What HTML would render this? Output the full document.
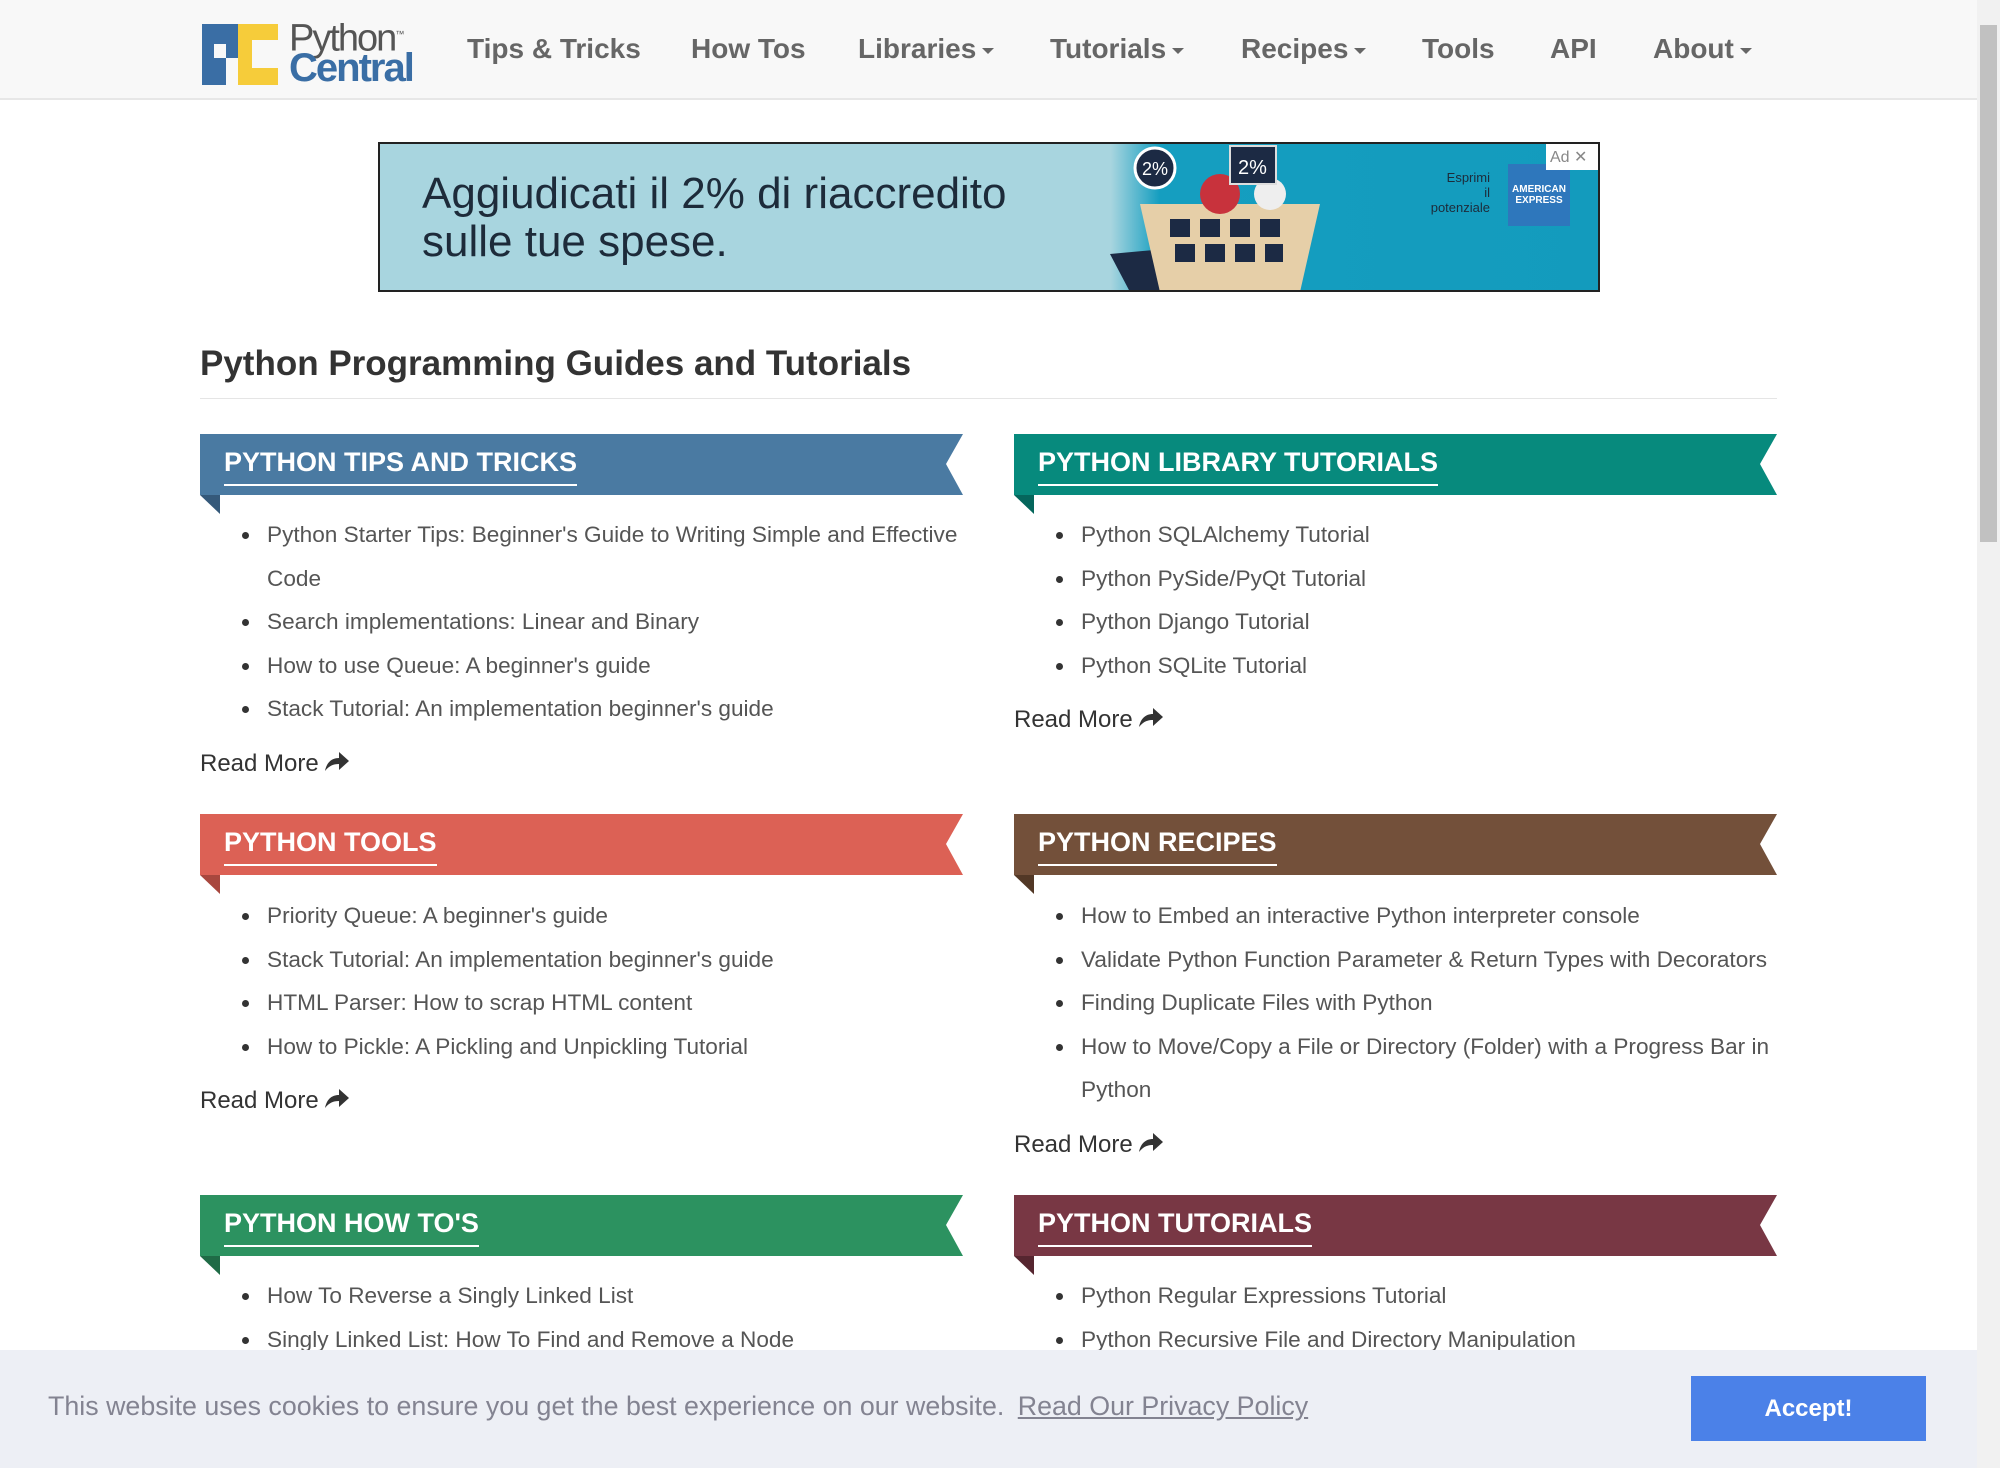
<!DOCTYPE html>
<html><head><meta charset="utf-8"><style>
*{margin:0;padding:0;box-sizing:border-box}
body{width:2000px;height:1468px;overflow:hidden;background:#fff;font-family:"Liberation Sans",Arial,sans-serif;position:relative}
.nav{position:absolute;left:0;top:0;width:1977px;height:100px;background:#f8f8f8;border-bottom:2px solid #e7e7e7}
.nav a{position:absolute;top:33px;font-size:28px;font-weight:bold;color:#666;text-decoration:none;white-space:nowrap}
.caret{display:inline-block;width:0;height:0;border-left:6px solid transparent;border-right:6px solid transparent;border-top:6px solid #666;vertical-align:middle;margin-left:6px}
.abs{position:absolute}
h1{position:absolute;left:200px;top:344px;font-size:35px;color:#333;font-weight:bold}
.rule{position:absolute;left:200px;top:398px;width:1577px;height:1px;background:#e5e5e5}
.ban{position:absolute;width:763px;height:80px}
.ban span{position:absolute;left:24px;top:13px;font-size:27px;font-weight:bold;color:#fff;border-bottom:2px solid #fff;padding-bottom:6px;white-space:nowrap}
ul{position:absolute;list-style:none}
li{position:relative;padding-left:67px;font-size:22.6px;color:#555;line-height:43.5px;width:770px}
li:before{content:"";position:absolute;left:42px;top:19px;width:7px;height:7px;border-radius:50%;background:#333}
.rm{position:absolute;font-size:24px;color:#333}
.rm svg{vertical-align:-1px;margin-left:6px}
</style></head><body>
<div class="nav">
 <svg class="abs" style="left:200px;top:22px" width="80" height="65" viewBox="0 0 80 65">
  <rect x="2" y="2" width="36" height="61" fill="#3a6ea5"/><rect x="14" y="22" width="12" height="14" fill="#f8f8f8"/>
  <rect x="38" y="2" width="40" height="61" fill="#f6cc3a"/><rect x="52" y="18" width="26" height="28" fill="#f8f8f8"/>
  <rect x="38" y="36" width="14" height="27" fill="#f6cc3a"/><rect x="26" y="36" width="12" height="27" fill="#f8f8f8"/>
 </svg>
 <div class="abs" style="left:289px;top:16px;font-size:38px;color:#555;letter-spacing:-2px;line-height:36px">Python<sup style="font-size:9px">™</sup></div>
 <div class="abs" style="left:289px;top:48px;font-size:40px;color:#3a6ea5;font-weight:bold;letter-spacing:-2px;line-height:40px">Central</div>
 <a style="left:467px">Tips &amp; Tricks</a>
 <a style="left:691px">How Tos</a>
 <a style="left:858px">Libraries<span class="caret"></span></a>
 <a style="left:1050px">Tutorials<span class="caret"></span></a>
 <a style="left:1241px">Recipes<span class="caret"></span></a>
 <a style="left:1422px">Tools</a>
 <a style="left:1550px">API</a>
 <a style="left:1653px">About<span class="caret"></span></a>
</div>
<div class="abs" style="left:1977px;top:0;width:23px;height:1468px;background:#f1f1f1"></div>
<div class="abs" style="left:1980px;top:25px;width:17px;height:517px;background:#c1c1c1"></div>

<div class="abs" style="left:378px;top:142px;width:1222px;height:150px;border:2px solid #222;background:linear-gradient(90deg,#a8d5df 0,#a8d5df 60%,#159ec0 64%,#139bbd 100%);overflow:hidden">
 <div class="abs" style="left:42px;top:26px;font-size:44px;color:#1d2b3a;line-height:48px">Aggiudicati il 2% di riaccredito<br>sulle tue spese.</div>
 <svg class="abs" style="left:690px;top:0" width="300" height="150" viewBox="0 0 300 150">
  <polygon points="40,110 150,100 220,110 210,148 60,148" fill="#1c2a44"/>
  <polygon points="70,60 250,60 230,148 90,148" fill="#e6cfa8"/>
  <g fill="#1c2a44"><rect x="100" y="75" width="20" height="18"/><rect x="130" y="75" width="20" height="18"/><rect x="160" y="75" width="20" height="18"/><rect x="190" y="75" width="20" height="18"/><rect x="105" y="100" width="20" height="18"/><rect x="135" y="100" width="20" height="18"/><rect x="165" y="100" width="20" height="18"/><rect x="195" y="100" width="18" height="18"/></g>
  <circle cx="150" cy="50" r="20" fill="#c8323c"/><circle cx="200" cy="50" r="16" fill="#eee"/>
  <circle cx="85" cy="24" r="20" fill="#1c2a44" stroke="#fff" stroke-width="3"/><text x="72" y="31" font-size="18" fill="#fff" font-family="Liberation Sans">2%</text>
  <rect x="160" y="2" width="46" height="38" fill="#1c2a44" stroke="#ddd" stroke-width="2"/><text x="168" y="30" font-size="20" fill="#fff" font-family="Liberation Sans">2%</text>
 </svg>
 <div class="abs" style="left:1040px;top:26px;font-size:13px;color:#1d2b3a;text-align:right;line-height:15px;width:70px">Esprimi<br>il<br>potenziale</div>
 <div class="abs" style="left:1128px;top:20px;width:62px;height:62px;background:#2e77bc;color:#fff;font-size:10px;font-weight:bold;text-align:center;padding-top:20px">AMERICAN EXPRESS</div>
 <div class="abs" style="left:1166px;top:0;width:56px;height:26px;background:#fff;color:#888;font-size:16px;padding:3px 4px">Ad ✕</div>
</div>

<h1>Python Programming Guides and Tutorials</h1>
<div class="rule"></div>

<svg class="ban" style="left:200px;top:434px" viewBox="0 0 763 80"><polygon points="0,0 763,0 746,30 763,61 0,61" fill="#4a7aa2"/><polygon points="0,61 20,61 20,80" fill="#35597a"/></svg>
<div class="ban" style="left:200px;top:434px"><span>PYTHON TIPS AND TRICKS</span></div>
<svg class="ban" style="left:1014px;top:434px" viewBox="0 0 763 80"><polygon points="0,0 763,0 746,30 763,61 0,61" fill="#078a7d"/><polygon points="0,61 20,61 20,80" fill="#05665c"/></svg>
<div class="ban" style="left:1014px;top:434px"><span>PYTHON LIBRARY TUTORIALS</span></div>
<svg class="ban" style="left:200px;top:814px" viewBox="0 0 763 80"><polygon points="0,0 763,0 746,30 763,61 0,61" fill="#dc6155"/><polygon points="0,61 20,61 20,80" fill="#a8473e"/></svg>
<div class="ban" style="left:200px;top:814px"><span>PYTHON TOOLS</span></div>
<svg class="ban" style="left:1014px;top:814px" viewBox="0 0 763 80"><polygon points="0,0 763,0 746,30 763,61 0,61" fill="#73503a"/><polygon points="0,61 20,61 20,80" fill="#523826"/></svg>
<div class="ban" style="left:1014px;top:814px"><span>PYTHON RECIPES</span></div>
<svg class="ban" style="left:200px;top:1195px" viewBox="0 0 763 80"><polygon points="0,0 763,0 746,30 763,61 0,61" fill="#2c9260"/><polygon points="0,61 20,61 20,80" fill="#1f6b46"/></svg>
<div class="ban" style="left:200px;top:1195px"><span>PYTHON HOW TO'S</span></div>
<svg class="ban" style="left:1014px;top:1195px" viewBox="0 0 763 80"><polygon points="0,0 763,0 746,30 763,61 0,61" fill="#783744"/><polygon points="0,61 20,61 20,80" fill="#562630"/></svg>
<div class="ban" style="left:1014px;top:1195px"><span>PYTHON TUTORIALS</span></div>

<ul style="left:200px;top:513px"><li>Python Starter Tips: Beginner's Guide to Writing Simple and Effective Code</li><li>Search implementations: Linear and Binary</li><li>How to use Queue: A beginner's guide</li><li>Stack Tutorial: An implementation beginner's guide</li></ul>
<div class="rm" style="left:200px;top:750px">Read More<svg width="24" height="20" viewBox="0 0 24 20"><path d="M0 19 C2 9 8 6 14 6 V0 L24 9 L14 18 V12 C8 12 4 14 0 19Z" fill="#333"/></svg></div>

<ul style="left:1014px;top:513px"><li>Python SQLAlchemy Tutorial</li><li>Python PySide/PyQt Tutorial</li><li>Python Django Tutorial</li><li>Python SQLite Tutorial</li></ul>
<div class="rm" style="left:1014px;top:706px">Read More<svg width="24" height="20" viewBox="0 0 24 20"><path d="M0 19 C2 9 8 6 14 6 V0 L24 9 L14 18 V12 C8 12 4 14 0 19Z" fill="#333"/></svg></div>

<ul style="left:200px;top:894px"><li>Priority Queue: A beginner's guide</li><li>Stack Tutorial: An implementation beginner's guide</li><li>HTML Parser: How to scrap HTML content</li><li>How to Pickle: A Pickling and Unpickling Tutorial</li></ul>
<div class="rm" style="left:200px;top:1087px">Read More<svg width="24" height="20" viewBox="0 0 24 20"><path d="M0 19 C2 9 8 6 14 6 V0 L24 9 L14 18 V12 C8 12 4 14 0 19Z" fill="#333"/></svg></div>

<ul style="left:1014px;top:894px"><li>How to Embed an interactive Python interpreter console</li><li>Validate Python Function Parameter &amp; Return Types with Decorators</li><li>Finding Duplicate Files with Python</li><li>How to Move/Copy a File or Directory (Folder) with a Progress Bar in Python</li></ul>
<div class="rm" style="left:1014px;top:1131px">Read More<svg width="24" height="20" viewBox="0 0 24 20"><path d="M0 19 C2 9 8 6 14 6 V0 L24 9 L14 18 V12 C8 12 4 14 0 19Z" fill="#333"/></svg></div>

<ul style="left:200px;top:1274px"><li>How To Reverse a Singly Linked List</li><li>Singly Linked List: How To Find and Remove a Node</li></ul>
<ul style="left:1014px;top:1274px"><li>Python Regular Expressions Tutorial</li><li>Python Recursive File and Directory Manipulation</li></ul>

<div class="abs" style="left:0;top:1350px;width:1977px;height:118px;background:#edeff5">
 <div class="abs" style="left:48px;top:41px;font-size:26.8px;color:#838391;white-space:nowrap">This website uses cookies to ensure you get the best experience on our website. <span style="text-decoration:underline;margin-left:6px">Read Our Privacy Policy</span></div>
 <div class="abs" style="left:1691px;top:26px;width:235px;height:65px;background:#4b81e8;color:#fff;font-size:24px;font-weight:bold;text-align:center;line-height:65px">Accept!</div>
</div>
</body></html>
